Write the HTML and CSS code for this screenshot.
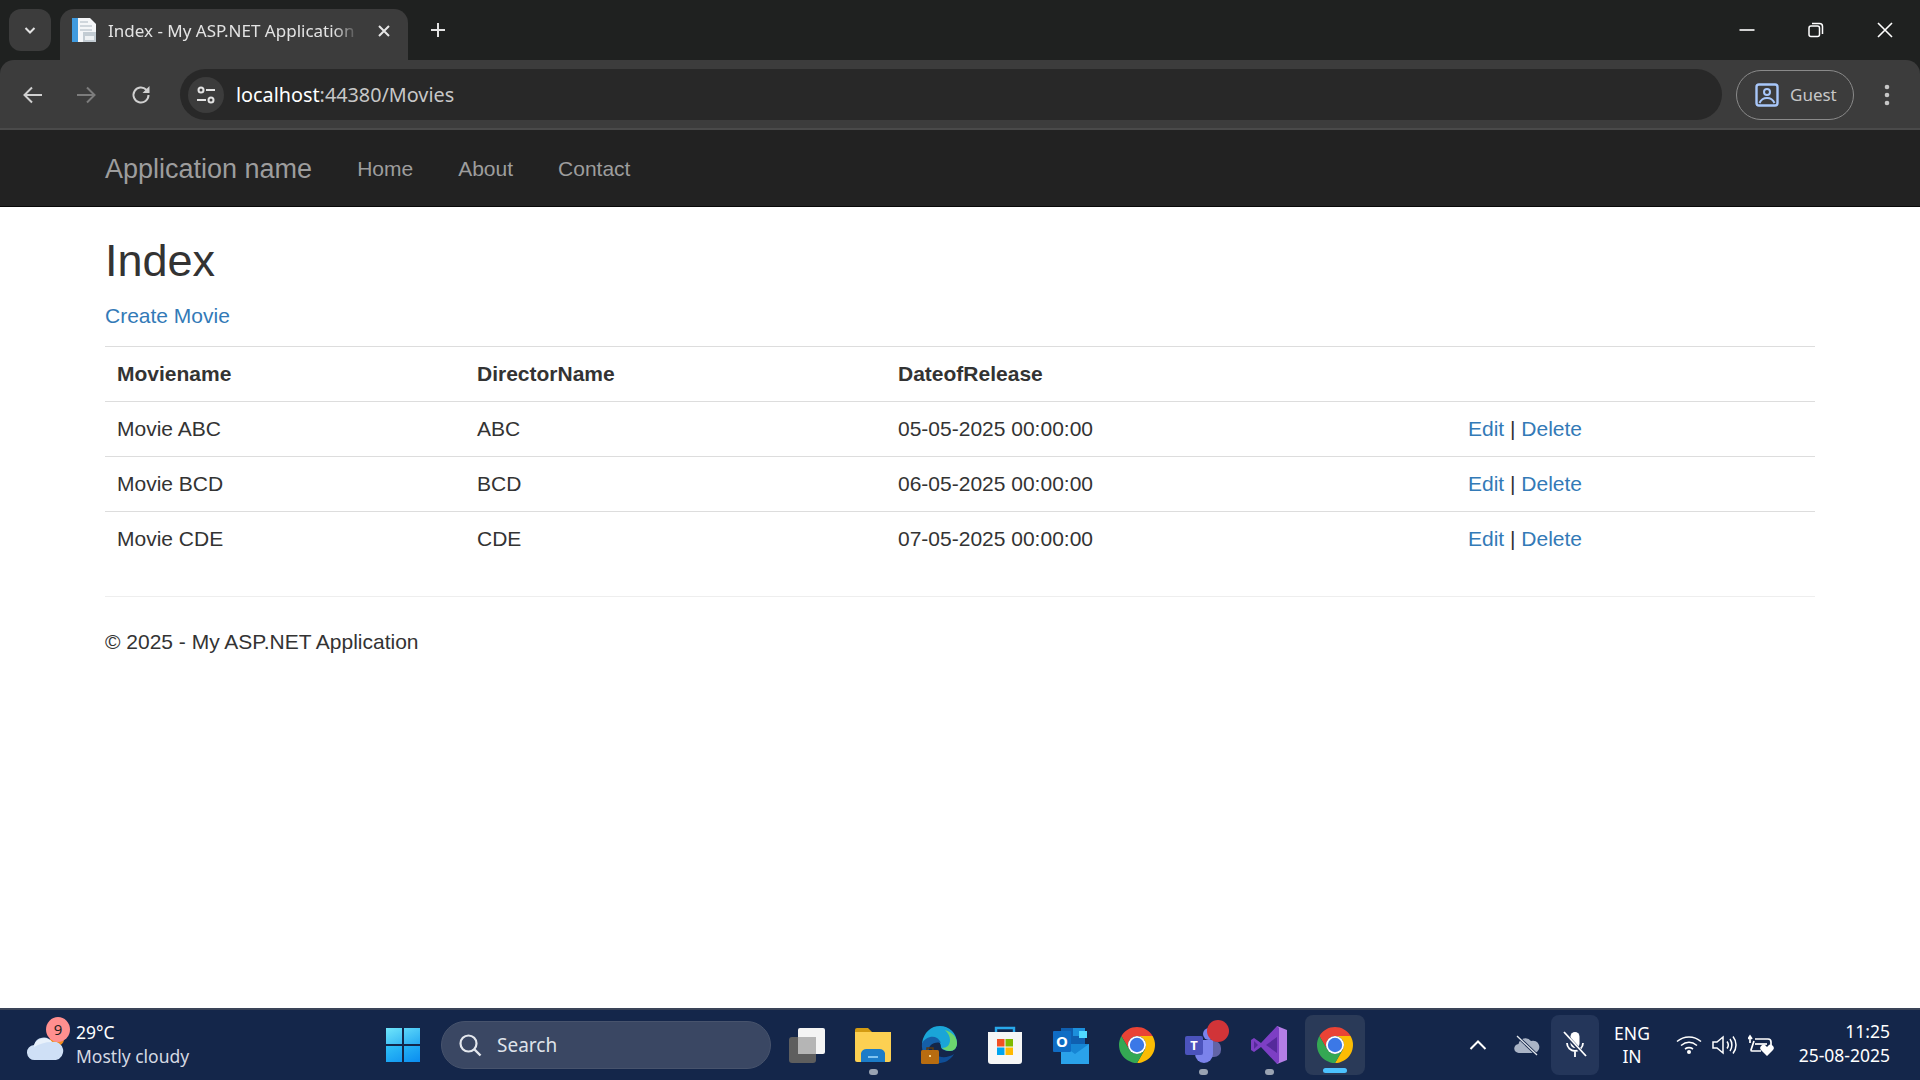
FILE: index.html
```html
<!DOCTYPE html>
<html lang="en">
<head>
  <meta charset="UTF-8">
  <title>Index - My ASP.NET Application</title>
  <link rel="stylesheet" href="styles.css">
</head>
<body>

  <svg class="defs" width="0" height="0">
    <symbol id="chrome" viewBox="4 4 40 40">
      <path fill="#ea4335" d="M6.68 14A20 20 0 0 1 41.32 14H24A10 10 0 0 0 15.34 29Z"/>
      <path fill="#fbbc04" d="M41.32 14A20 20 0 0 1 24 44L32.66 29A10 10 0 0 0 24 14Z"/>
      <path fill="#34a853" d="M24 44A20 20 0 0 1 6.68 14L15.34 29A10 10 0 0 0 32.66 29Z"/>
      <circle cx="24" cy="24" r="10" fill="#fff"/>
      <circle cx="24" cy="24" r="8" fill="#3b78e7"/>
    </symbol>
  </svg>

  <div class="browser">
    <div class="tabstrip">
      <button class="tab-search">
        <svg width="14" height="14" viewBox="0 0 14 14"><path d="M2.500 5l4.500 4.500L11.500 5" fill="none" stroke="#e3e3e3" stroke-width="2"/></svg>
      </button>
      <div class="tab">
        <svg class="favicon" width="25" height="25" viewBox="0 0 25 25">
          <path fill="#f4f6f8" d="M0 0h18l6 6v18H0z"/>
          <path fill="#3f9be0" d="M0 0h6v24H0z"/>
          <path fill="#cfd6dc" d="M8 3h8v2H8zM8 7h12v2H8zM8 11h12v2H8z"/>
          <path fill="#c3ccd3" d="M11 14h13v10H11z"/>
          <path fill="#eef1f3" d="M13 18h9v4h-9z"/>
        </svg>
        <span class="tab-title">Index - My ASP.NET Application</span>
        <svg class="tab-close" width="14" height="14" viewBox="0 0 14 14"><path d="M2 2l10 10M12 2L2 12" stroke="#e6e6e6" stroke-width="2"/></svg>
      </div>
      <svg class="new-tab" width="18" height="18" viewBox="0 0 18 18"><path d="M9 2v14M2 9h14" stroke="#e3e3e3" stroke-width="2"/></svg>
      <div class="window-controls">
        <svg width="16" height="16" viewBox="0 0 16 16"><path d="M0.500 8h15" stroke="#fff" stroke-width="1.600"/></svg>
        <svg width="16" height="16" viewBox="0 0 16 16"><rect x="1" y="4" width="10.500" height="10.500" rx="2" fill="none" stroke="#fff" stroke-width="1.500"/><path d="M4 1.500h7.500a3 3 0 0 1 3 3V12" fill="none" stroke="#fff" stroke-width="1.500"/></svg>
        <svg width="16" height="16" viewBox="0 0 16 16"><path d="M1 1l14 14M15 1L1 15" stroke="#fff" stroke-width="1.600"/></svg>
      </div>
    </div>

    <div class="toolbar">
      <svg class="tool tool-back" width="24" height="24" viewBox="0 0 24 24"><path d="M21 12H4M11 4.500L3.500 12l7.500 7.500" fill="none" stroke="#d0d0d0" stroke-width="2"/></svg>
      <svg class="tool tool-forward" width="24" height="24" viewBox="0 0 24 24"><path d="M3 12h17M13 4.500l7.500 7.500-7.500 7.500" fill="none" stroke="#7c7c7c" stroke-width="2"/></svg>
      <svg class="tool tool-reload" width="24" height="24" viewBox="0 0 24 24"><path d="M19.500 12a7.500 7.500 0 1 1-2.200-5.300L19.500 9" fill="none" stroke="#d0d0d0" stroke-width="2"/><path d="M20.500 3v7h-7" fill="#d0d0d0"/></svg>
      <div class="omnibox">
        <span class="site-info">
          <svg width="20" height="20" viewBox="0 0 20 20"><g fill="none" stroke="#e3e3e3" stroke-width="2"><circle cx="5" cy="5" r="2.500"/><circle cx="15" cy="15" r="2.500"/><path d="M10 5h9M1 15h9"/></g></svg>
        </span>
        <span class="url">localhost<span class="url-rest">:44380/Movies</span></span>
      </div>
      <div class="profile">
        <svg width="24" height="24" viewBox="0 0 24 24"><rect x="1.500" y="1.500" width="21" height="21" rx="2.500" fill="none" stroke="#a8c7fa" stroke-width="2.400"/><circle cx="12" cy="9" r="3" fill="none" stroke="#a8c7fa" stroke-width="2"/><path d="M4.500 20c1.500-3.500 4-5 7.500-5s6 1.500 7.500 5" fill="none" stroke="#a8c7fa" stroke-width="2"/></svg>
        <span>Guest</span>
      </div>
      <svg class="menu-dots" width="6" height="22" viewBox="0 0 6 22"><circle cx="3" cy="3" r="2.300" fill="#c7c7c7"/><circle cx="3" cy="11" r="2.300" fill="#c7c7c7"/><circle cx="3" cy="19" r="2.300" fill="#c7c7c7"/></svg>
    </div>
  </div>

  <nav class="navbar">
    <div class="container nav-row">
      <a class="brand">Application name</a>
      <a class="nav-link">Home</a>
      <a class="nav-link">About</a>
      <a class="nav-link">Contact</a>
    </div>
  </nav>

  <main class="container content">
    <h2>Index</h2>
    <p><a href="#">Create Movie</a></p>
    <table class="table">
      <colgroup>
        <col class="col-name"><col class="col-director"><col class="col-date"><col>
      </colgroup>
      <tr>
        <th>Moviename</th>
        <th>DirectorName</th>
        <th>DateofRelease</th>
        <th></th>
      </tr>
      <tr>
        <td>Movie ABC</td>
        <td>ABC</td>
        <td>05-05-2025 00:00:00</td>
        <td><a href="#">Edit</a> | <a href="#">Delete</a></td>
      </tr>
      <tr>
        <td>Movie BCD</td>
        <td>BCD</td>
        <td>06-05-2025 00:00:00</td>
        <td><a href="#">Edit</a> | <a href="#">Delete</a></td>
      </tr>
      <tr>
        <td>Movie CDE</td>
        <td>CDE</td>
        <td>07-05-2025 00:00:00</td>
        <td><a href="#">Edit</a> | <a href="#">Delete</a></td>
      </tr>
    </table>
    <hr>
    <footer>
      <p>© 2025 - My ASP.NET Application</p>
    </footer>
  </main>

  <div class="taskbar">
    <div class="weather">
      <div class="weather-icon">
        <svg width="40" height="44" viewBox="0 0 40 44">
          <circle cx="30" cy="17" r="7" fill="#f28c1e"/>
          <path fill="#cfe0f6" d="M8 38a7.500 7.500 0 0 1-1-15 10 10 0 0 1 18-3 8.500 8.500 0 0 1 4 18z"/>
          <path fill="#e8f1fb" d="M7 25a10 9 0 0 1 18-5c-7 0-13 2-18 5z"/>
        </svg>
        <span class="weather-badge">9</span>
      </div>
      <div class="weather-text">
        <div class="temp">29°C</div>
        <div>Mostly cloudy</div>
      </div>
    </div>

    <div class="center-group">
      <div class="task-btn">
        <svg width="36" height="36" viewBox="0 0 36 36">
          <defs>
            <linearGradient id="winA" x1="0" y1="0" x2="1" y2="1"><stop offset="0" stop-color="#6fe6fb"/><stop offset="1" stop-color="#26a9f2"/></linearGradient>
            <linearGradient id="winB" x1="0" y1="0" x2="1" y2="1"><stop offset="0" stop-color="#2fc0f7"/><stop offset="1" stop-color="#0a8cf0"/></linearGradient>
          </defs>
          <path fill="url(#winA)" d="M1 1h16v16H1zM19 1h16v16H19z"/>
          <path fill="url(#winB)" d="M1 19h16v16H1zM19 19h16v16H19z"/>
        </svg>
      </div>
      <div class="search">
        <svg width="26" height="26" viewBox="0 0 26 26"><circle cx="11.500" cy="11.500" r="8" fill="none" stroke="#e4e8ee" stroke-width="2.200"/><path d="M17.500 17.500l6 6" stroke="#e4e8ee" stroke-width="2.400"/></svg>
        <span>Search</span>
      </div>
      <div class="apps">
        <div class="task-btn">
          <svg width="36" height="36" viewBox="0 0 36 36">
            <rect x="0" y="10" width="27" height="26" rx="3" fill="#5e5e5e"/>
            <rect x="9" y="1" width="27" height="26" rx="2" fill="#f4f4f4"/>
            <rect x="9" y="10" width="18" height="17" fill="#b5b5b5"/>
          </svg>
        </div>
        <div class="task-btn running">
          <svg width="36" height="36" viewBox="0 0 36 36">
            <path fill="#d39b12" d="M0 3a2 2 0 0 1 2-2h11l4 4h-17z"/>
            <path fill="#fcd052" d="M0 5h36v28a2 2 0 0 1-2 2H2a2 2 0 0 1-2-2z"/>
            <path fill="#1b7cc8" d="M6 35V26a6 6 0 0 1 6-4h12a6 6 0 0 1 6 4v9z"/>
            <path fill="#7fc4f0" d="M13 29h10v2H13z"/>
          </svg>
        </div>
        <div class="task-btn">
          <svg width="36" height="38" viewBox="0 0 36 38">
            <path fill="#1aa5d8" d="M1 17C3 6 10 0 19 0c9 0 17 7 17 17 0 5-3 8-7 8-5 0-9-2-9-4 0-6-6-9-11-6-4 2-7 4-8 2z"/>
            <path fill="#6cd66e" d="M24 4c7 2 12 7 12 13 0 5-3 8-7 8-3 0-6-1-8-3 5 0 8-3 8-8 0-4-2-7-5-10z"/>
            <path fill="#155fa8" d="M1 17c3-5 10-8 15-5 3 2 4 5 4 5s-7-2-11 3c-3 4-2 12 3 16C5 34 0 26 1 17z"/>
            <path fill="#0f4e97" d="M14 37c8 1 15-2 19-9-6 4-13 4-19 1z"/>
            <rect x="0" y="24" width="18" height="14" rx="1.500" fill="#b86c10"/>
            <path fill="none" stroke="#5b3a12" stroke-width="1.500" d="M6 24v-2h6v2"/>
            <rect x="8" y="29" width="2" height="2" fill="#f8d58a"/>
          </svg>
        </div>
        <div class="task-btn">
          <svg width="36" height="38" viewBox="0 0 36 38">
            <path fill="none" stroke="#28a8ea" stroke-width="2.400" d="M9 8V2h18v6"/>
            <path fill="#f6f6f6" d="M1 6h34v29a3 3 0 0 1-3 3H4a3 3 0 0 1-3-3z"/>
            <rect x="10" y="13" width="7.500" height="7.500" fill="#f25022"/>
            <rect x="18.500" y="13" width="7.500" height="7.500" fill="#7fba00"/>
            <rect x="10" y="21.500" width="7.500" height="7.500" fill="#00a4ef"/>
            <rect x="18.500" y="21.500" width="7.500" height="7.500" fill="#ffb900"/>
          </svg>
        </div>
        <div class="task-btn outlook">
          <svg width="36" height="38" viewBox="0 0 36 38">
            <path fill="#0f5fb0" d="M8 2h24v16H8z"/>
            <path fill="#1c8fdc" d="M20 2h12v8H20z"/>
            <path fill="#50d9ff" d="M26 5h8v7h-8z"/>
            <path fill="#1685d4" d="M8 18h28v20H8z"/>
            <path fill="#2aa2ea" d="M8 18l14 10 14-10v20H8z"/>
          </svg>
          <span class="outlook-tile">O</span>
        </div>
        <div class="task-btn">
          <svg width="36" height="36"><use href="#chrome"/></svg>
        </div>
        <div class="task-btn running teams">
          <svg width="36" height="38" viewBox="0 0 36 38">
            <circle cx="24" cy="8" r="6" fill="#7b83eb"/>
            <rect x="12" y="15" width="24" height="16" rx="7" fill="#6264a7"/>
            <path fill="#7b83eb" d="M10 14h18v14a9 9 0 0 1-18 0z"/>
            <circle cx="31" cy="11" r="4" fill="#5059c9"/>
          </svg>
          <span class="teams-tile">T</span>
          <span class="teams-dot"></span>
        </div>
        <div class="task-btn running">
          <svg width="36" height="38" viewBox="0 0 36 38">
            <path fill="#b57ee5" d="M26 0l10 4v30l-10 4z"/>
            <path fill="#7d3fc4" d="M26 0L10 17l-7-5-3 2v10l3 2 7-5 16 17 2-2V2z"/>
            <path fill="#562a9b" d="M3 15v8l4-4zM26 11L15 19l11 8z"/>
          </svg>
        </div>
        <div class="task-btn active">
          <svg width="36" height="36"><use href="#chrome"/></svg>
        </div>
      </div>
    </div>

    <div class="tray">
      <svg width="18" height="12" viewBox="0 0 18 12"><path d="M1.500 10L9 2.500l7.500 7.500" fill="none" stroke="#fff" stroke-width="2"/></svg>
      <svg class="onedrive" width="26" height="22" viewBox="0 0 26 22">
        <path fill="#aab4c6" d="M5 19a4.500 4.500 0 0 1-.5-9A7 7 0 0 1 17 7a5.500 5.500 0 0 1 4 12z"/>
        <path d="M3 2l20 19" stroke="#14264a" stroke-width="3"/>
        <path d="M3 2l20 19" stroke="#e4e8ee" stroke-width="1.300"/>
      </svg>
      <div class="mic">
        <svg width="26" height="28" viewBox="0 0 26 28">
          <rect x="8.500" y="1" width="9" height="16" rx="4.500" fill="#fff"/>
          <path d="M5 12a8 8 0 0 0 16 0M13 20v6" fill="none" stroke="#fff" stroke-width="1.800"/>
          <path d="M2 2l22 24" stroke="#24365a" stroke-width="3.500"/>
          <path d="M2 1l22 24" stroke="#fff" stroke-width="1.800"/>
        </svg>
      </div>
      <div class="lang">ENG<br>IN</div>
      <div class="tray-icons">
        <svg width="26" height="20" viewBox="0 0 26 20"><g fill="none" stroke="#fff" stroke-width="1.600"><path d="M1 6.500c7-6 17-6 24 0"/><path d="M5 10.500c5-4 11-4 16 0"/><path d="M9 14c3-2 5-2 8 0"/></g><circle cx="13" cy="17" r="2" fill="#fff"/></svg>
        <svg width="26" height="20" viewBox="0 0 26 20"><g fill="none" stroke="#fff" stroke-width="1.500"><path d="M1 7v6h4l6 5V2L5 7z"/><path d="M15 6.500c1.500 2 1.500 5 0 7"/><path d="M18 4c2.500 3.500 2.500 8.500 0 12"/><path d="M21 1.500c4 5 4 12 0 17"/></g></svg>
        <svg width="26" height="24" viewBox="0 0 26 24"><g fill="none" stroke="#fff" stroke-width="1.700"><path d="M2 10V4M0 6l2-3 2 3"/><path d="M7 6h13a3 3 0 0 1 3 3v4"/><path d="M6 8L3 17a1 1 0 0 0 1 1h9"/><path d="M7 11h12"/></g><path fill="#fff" d="M19 23l-6-6a3 3 0 0 1 5-4l1 1 1-1a3 3 0 0 1 5 4z"/></svg>
      </div>
      <div class="clock">11:25<br>25-08-2025</div>
    </div>
  </div>

</body>
</html>
```

FILE: styles.css
```css
* { box-sizing: border-box; }

html, body {
  height: 100%;
}

body {
  margin: 0;
  display: flex;
  flex-direction: column;
  height: 1080px;
  overflow: hidden;
  background-color: #fff;
  color: #333;
  font-family: "Liberation Sans", Arial, sans-serif;
  font-size: 21px;
  line-height: 30px;
}

.defs {
  position: absolute;
}

a {
  color: #337ab7;
  text-decoration: none;
}

/* browser chrome */
.browser {
  flex: none;
  height: 130px;
  background-color: #1f2120;
  font-family: "Noto Sans", sans-serif;
}

.tabstrip {
  display: flex;
  align-items: flex-start;
  height: 60px;
  padding: 9px 0 0 9px;
}

.tab-search {
  display: flex;
  align-items: center;
  justify-content: center;
  width: 42px;
  height: 42px;
  padding: 0;
  border: none;
  border-radius: 12px;
  background-color: #3c3c3c;
}

.tab {
  display: flex;
  align-items: center;
  width: 348px;
  height: 51px;
  margin-left: 9px;
  padding: 0 17px 8px 12px;
  border-radius: 14px 14px 0 0;
  background-color: #3c3c3c;
}

.tab-title {
  flex: 1;
  margin-left: 11px;
  overflow: hidden;
  white-space: nowrap;
  color: #e3e3e3;
  font-size: 17px;
  -webkit-mask-image: linear-gradient(to right, #000 90%, transparent 100%);
  mask-image: linear-gradient(to right, #000 90%, transparent 100%);
}

.tab-close {
  margin-left: 18px;
}

.new-tab {
  margin: 12px 0 0 21px;
}

.window-controls {
  display: flex;
  gap: 53px;
  margin: 13px 27px 0 auto;
}

.toolbar {
  display: flex;
  align-items: center;
  height: 70px;
  padding: 1px 0 0 21px;
  border-bottom: 2px solid #4a4a4a;
  border-radius: 14px 14px 0 0;
  background-color: #3c3c3c;
}

.tool-back { margin-right: 29px; }
.tool-forward { margin-right: 31px; }
.tool-reload { margin-right: 27px; }

.omnibox {
  display: flex;
  align-items: center;
  width: 1542px;
  height: 51px;
  padding-left: 8px;
  border-radius: 26px;
  background-color: #282828;
}

.site-info {
  display: flex;
  align-items: center;
  justify-content: center;
  width: 36px;
  height: 36px;
  border-radius: 50%;
  background-color: #3c3c3c;
}

.url {
  margin-left: 12px;
  color: #fff;
  font-size: 19.8px;
}

.url-rest {
  color: #c7c7c7;
}

.profile {
  display: flex;
  align-items: center;
  gap: 11px;
  width: 118px;
  height: 50px;
  margin-left: 14px;
  padding-left: 18px;
  border: 1.5px solid #8a8a8a;
  border-radius: 25px;
  color: #c7c7c7;
  font-size: 17px;
}

.menu-dots {
  margin-left: 30px;
}

/* navbar */
.navbar {
  flex: none;
  height: 77px;
  border-bottom: 1px solid #080808;
  background-color: #222;
}

.container {
  width: 1710px;
  margin: 0 auto;
}

.nav-row {
  display: flex;
  align-items: center;
  height: 76px;
  padding-top: 2px;
}

.brand {
  margin-right: 45px;
  color: #9d9d9d;
  font-size: 27px;
}

.nav-link {
  margin-right: 45px;
  color: #9d9d9d;
}

/* page */
.content {
  flex: 1;
  min-height: 0;
}

h2 {
  margin: 29px 0 15px;
  color: #333;
  font-size: 45px;
  font-weight: 500;
  line-height: 50px;
}

p {
  margin: 0 0 15px;
}

.table {
  width: 100%;
  margin-bottom: 30px;
  border-collapse: collapse;
  table-layout: fixed;
}

.col-name { width: 360px; }
.col-director { width: 421px; }
.col-date { width: 570px; }

.table th,
.table td {
  padding: 12px;
  border-top: 1px solid #ddd;
  text-align: left;
  vertical-align: top;
}

.table th {
  border-bottom: 1px solid #ddd;
  font-weight: bold;
}

hr {
  margin: 0 0 30px;
  border: none;
  border-top: 1px solid #eee;
}

footer p {
  margin: 0;
}

/* taskbar */
.taskbar {
  flex: none;
  display: flex;
  align-items: center;
  height: 72px;
  border-top: 2px solid #3a4458;
  background-color: #14264a;
  color: #fff;
  font-family: "Noto Sans", sans-serif;
}

.weather {
  display: flex;
  align-items: center;
  width: 373px;
  padding-left: 27px;
}

.weather-icon {
  position: relative;
  width: 40px;
  height: 44px;
  margin-top: -2px;
}

.weather-badge {
  position: absolute;
  top: -5px;
  left: 19px;
  width: 24px;
  height: 25px;
  border-radius: 50%;
  background-color: #ff8f8f;
  color: #222;
  font-size: 15px;
  line-height: 25px;
  text-align: center;
}

.weather-text {
  margin: -2px 0 0 9px;
  color: #d5d9e2;
  font-size: 17.5px;
  line-height: 24px;
}

.temp {
  color: #fff;
}

.center-group {
  display: flex;
  align-items: center;
}

.task-btn {
  position: relative;
  display: flex;
  align-items: center;
  justify-content: center;
  width: 60px;
  height: 60px;
}

.search {
  display: flex;
  align-items: center;
  gap: 14px;
  width: 330px;
  height: 48px;
  margin-left: 8px;
  padding-left: 15px;
  border: 1px solid #47536c;
  border-radius: 24px;
  background-color: #3a4763;
  color: #dfe3ea;
  font-size: 19px;
}

.apps {
  display: flex;
  gap: 6px;
  margin-left: 6px;
}

.running::after {
  content: "";
  position: absolute;
  bottom: 0;
  left: 26px;
  width: 9px;
  height: 6px;
  border-radius: 3px;
  background-color: #9aa3b2;
}

.active {
  border-radius: 8px;
  background-color: #2a3a58;
}

.active::after {
  content: "";
  position: absolute;
  bottom: 2px;
  left: 18px;
  width: 24px;
  height: 5px;
  border-radius: 3px;
  background-color: #4cc2ff;
}

.outlook-tile {
  position: absolute;
  top: 16px;
  left: 12px;
  width: 18px;
  height: 21px;
  border-radius: 1px;
  background-color: #0f6cc4;
  color: #fff;
  font-size: 15px;
  font-weight: bold;
  line-height: 21px;
  text-align: center;
}

.teams-tile {
  position: absolute;
  top: 21px;
  left: 12px;
  width: 18px;
  height: 19px;
  border-radius: 2px;
  background-color: #4b53bc;
  color: #fff;
  font-size: 13px;
  font-weight: bold;
  line-height: 19px;
  text-align: center;
}

.teams-dot {
  position: absolute;
  top: 5px;
  left: 34px;
  width: 22px;
  height: 22px;
  border-radius: 50%;
  background-color: #d13438;
}

.tray {
  display: flex;
  align-items: center;
  margin-left: auto;
  padding-right: 30px;
  font-size: 17.5px;
  line-height: 23.500px;
}

.onedrive {
  margin-left: 27px;
}

.mic {
  display: flex;
  align-items: center;
  justify-content: center;
  width: 48px;
  height: 60px;
  margin-left: 11px;
  border-radius: 8px;
  background-color: #24365a;
}

.lang {
  width: 50px;
  margin-left: 8px;
  text-align: center;
}

.tray-icons {
  display: flex;
  align-items: center;
  gap: 10px;
  margin-left: 19px;
}

.clock {
  width: 110px;
  margin: -3px 0 0 6px;
  text-align: right;
}
```
